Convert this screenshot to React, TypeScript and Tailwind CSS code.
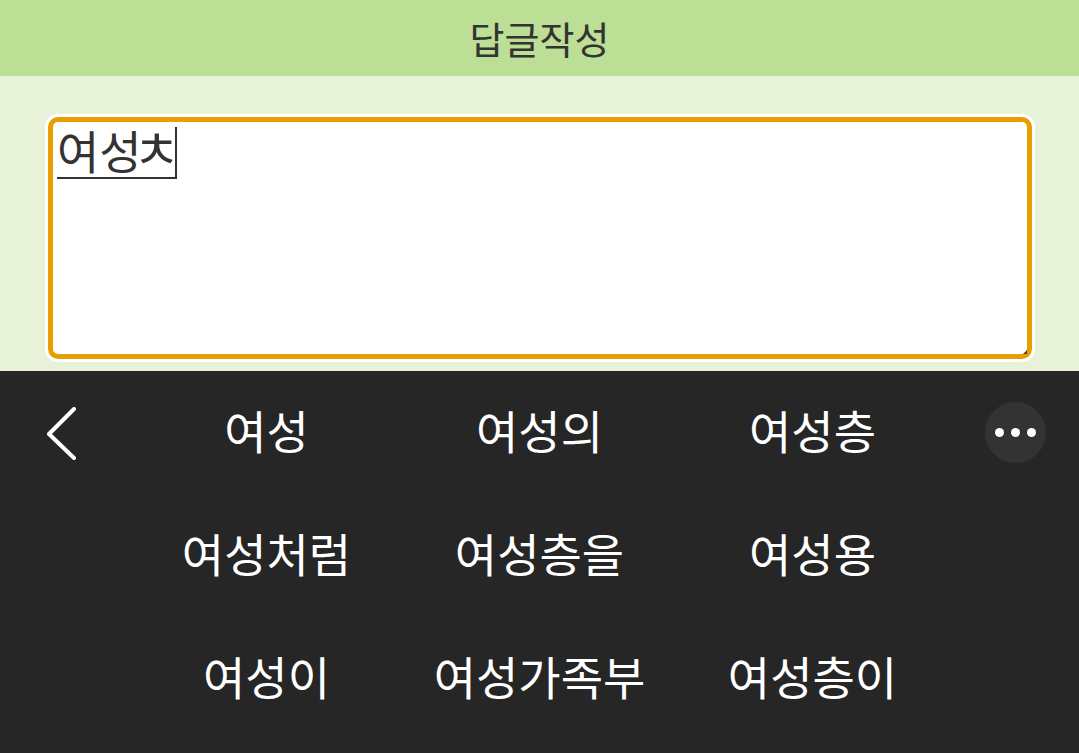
const font = { fontFamily: '"Noto Sans CJK KR", sans-serif' };
function Cell({ t }: { t: string }) {
  return <div className="flex items-center justify-center whitespace-nowrap text-[46px] leading-none text-white">{t}</div>;
}
export default function App() {
  const rows = [["여성", "여성의", "여성층"], ["여성처럼", "여성층을", "여성용"], ["여성이", "여성가족부", "여성층이"]];
  return (
    <div className="flex h-[753px] w-[1079px] flex-col overflow-hidden bg-[#e7f2d9]" style={font}>
      <div className="flex h-[76px] items-center justify-center bg-[#bcde95] pb-[1px] text-[38px] text-[#333333]">답글작성</div>
      <div className="flex h-[295px] flex-col pl-[48px] pt-[41px]">
        <div className="relative h-[242px] w-[984px] rounded-[10px] border-[5px] border-[#e99e00] bg-white shadow-[0_0_0_3px_#ffffff]">
          <div className="ml-[4px] mt-[5px] inline-flex h-[52px] items-center border-r-2 border-b-2 border-[#333333] text-[46px] leading-none text-[#333333]">
            <span className="relative -top-[3px]">여성</span>
            <span className="relative -top-[5px] -ml-[9px] -mr-[5px] text-[52px] leading-none">ㅊ</span>
          </div>
          <svg className="absolute bottom-0 right-0" width="4" height="4" viewBox="0 0 4 4">
            <path d="M4 0 L4 4 L0 4 Z" fill="#444444" />
          </svg>
        </div>
      </div>
      <div className="flex flex-1 bg-[#262626]">
        <div className="flex w-[130px] flex-col items-center pt-[36px] pr-[6px]">
          <svg width="34" height="54" viewBox="0 0 34 54" fill="none" stroke="#ffffff" strokeWidth="4" strokeLinecap="round" strokeLinejoin="round">
            <path d="M29 2 L4 27 L29 51" />
          </svg>
        </div>
        <div className="grid w-[819px] -translate-y-[4px] grid-cols-[273px_273px_273px] grid-rows-[123px_123px_123px]">
          {rows.flat().map((t) => <Cell key={t} t={t} />)}
        </div>
        <div className="flex flex-1 justify-end pr-[33px] pt-[31px]">
          <div className="flex h-[61px] w-[61px] items-center justify-center gap-[7px] rounded-full bg-[#333333]">
            <span className="h-[9px] w-[9px] rounded-full bg-white" />
            <span className="h-[9px] w-[9px] rounded-full bg-white" />
            <span className="h-[9px] w-[9px] rounded-full bg-white" />
          </div>
        </div>
      </div>
    </div>
  );
}
